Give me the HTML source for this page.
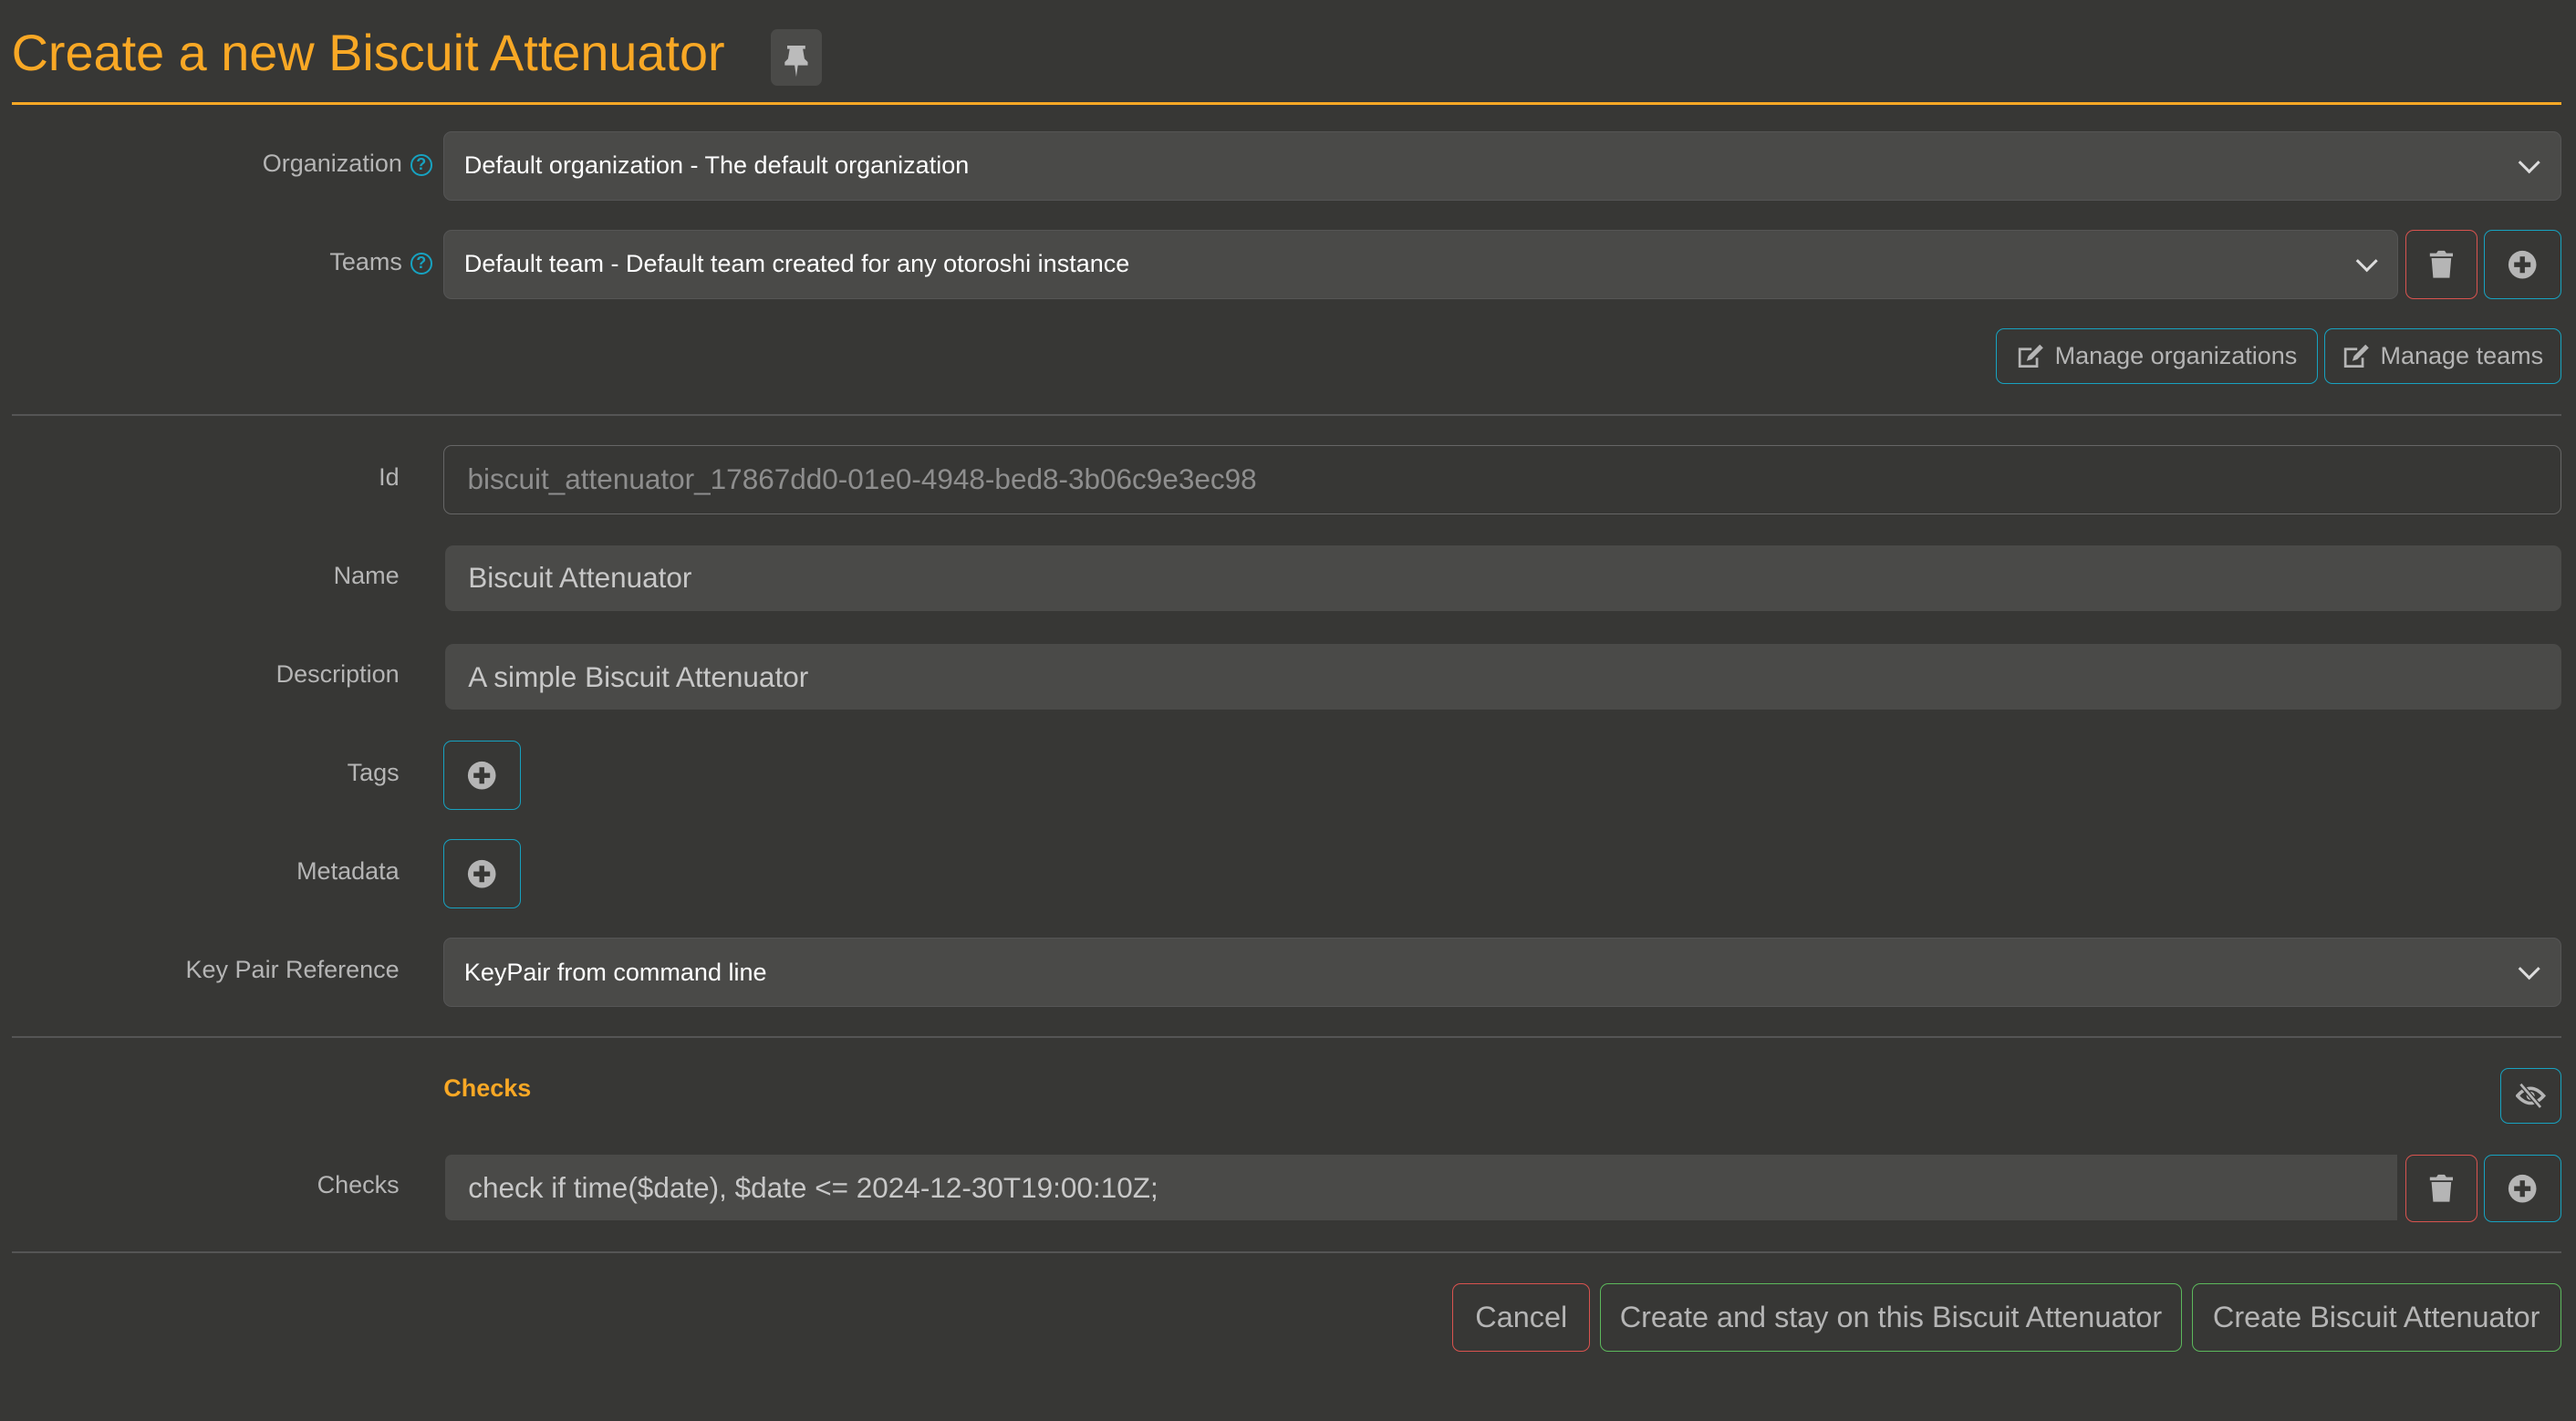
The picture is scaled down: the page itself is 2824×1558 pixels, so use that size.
<!DOCTYPE html>
<html><head><meta charset="utf-8"><style>
html,body{margin:0;padding:0;background:#373735;width:2824px;height:1558px;overflow:hidden}
#w{position:absolute;left:0;top:0;width:1568px;height:865px;zoom:1.80102;font-family:"Liberation Sans",sans-serif}
.a{position:absolute;box-sizing:border-box}
.lbl{position:absolute;right:1325px;color:#b5b5b5;font-size:15px;text-align:right;white-space:nowrap}
.sel{background:#4a4a48;border:1px solid #555;border-radius:5px;color:#fff;font-size:15px;padding-left:12px;display:flex;align-items:center}
.inp{background:#4a4a48;border-radius:5px;color:#c8c8c8;font-size:17.5px;padding-left:14px;display:flex;align-items:center}
.btn{border:1px solid #17a2c0;border-radius:5px;display:flex;align-items:center;justify-content:center;color:#b5b5b5}
.red{border-color:#d9534f}.grn{border-color:#5cb85c}
.hr{position:absolute;left:7px;width:1552px;height:1px;background:#555}
.chev{position:absolute;right:14px;top:50%;width:8px;height:8px;border-right:2px solid #ddd;border-bottom:2px solid #ddd;transform:translateY(-70%) rotate(45deg)}
.q{display:inline-block;width:11px;height:11px;border:1.5px solid #17a2c0;border-radius:50%;color:#17a2c0;font-size:10px;line-height:11px;text-align:center;font-weight:bold;vertical-align:1px;margin-left:5px}
</style></head><body><div id="w">
<div class="a" style="left:7px;top:14px;color:#f9a825;font-size:31px">Create a new Biscuit Attenuator</div>
<div class="a" style="left:469px;top:18px;width:31px;height:34px;background:#4a4a48;border-radius:4px"><svg width="31" height="34" viewBox="0 0 31 34"><path d="M10 10h11v2h-1.5l1 6 2 2v2H8.5v-2l2-2 1-6H10z M14.5 22h2l-1 7z" fill="#bbb"/></svg></div>
<div class="a" style="left:7px;top:62px;width:1552px;height:2px;background:#f9a825"></div>

<div class="lbl" style="top:91px;right:1305px">Organization<span class="q">?</span></div>
<div class="a sel" style="left:270px;top:80px;width:1289px;height:42px">Default organization - The default organization<div class="chev"></div></div>
<div class="lbl" style="top:151px;right:1305px">Teams<span class="q">?</span></div>
<div class="a sel" style="left:270px;top:140px;width:1190px;height:42px">Default team - Default team created for any otoroshi instance<div class="chev"></div></div>
<div class="a btn red" style="left:1464px;top:140px;width:44px;height:42px"><svg width="16" height="18" viewBox="0 0 16 18"><path d="M1 2h4l1-1.5h4L11 2h4v2H1z M2 5h12l-1 12H3z" fill="#b5b5b5"/></svg></div>
<div class="a btn" style="left:1512px;top:140px;width:47px;height:42px"><svg width="18" height="18" viewBox="0 0 18 18"><circle cx="9" cy="9" r="8.5" fill="#b5b5b5"/><path d="M7.5 4h3v3.5H14v3h-3.5V14h-3v-3.5H4v-3h3.5z" fill="#373735"/></svg></div>
<div class="a btn" style="left:1215px;top:200px;width:196px;height:34px;font-size:15px"><svg width="18" height="16" viewBox="0 0 18 16" style="margin-right:5px"><path d="M1 3h8v1.5H2.5v9h9V9H13v6H1z" fill="#b5b5b5"/><path d="M6 11l1-3 7-7 2 2-7 7z" fill="#b5b5b5"/></svg>Manage organizations</div>
<div class="a btn" style="left:1415px;top:200px;width:144px;height:34px;font-size:15px"><svg width="18" height="16" viewBox="0 0 18 16" style="margin-right:5px"><path d="M1 3h8v1.5H2.5v9h9V9H13v6H1z" fill="#b5b5b5"/><path d="M6 11l1-3 7-7 2 2-7 7z" fill="#b5b5b5"/></svg>Manage teams</div>
<div class="hr" style="top:252px"></div>

<div class="lbl" style="top:282px">Id</div>
<div class="a inp" style="left:270px;top:271px;width:1289px;height:42px;background:#373735;border:1px solid #666;color:#8e8e8e">biscuit_attenuator_17867dd0-01e0-4948-bed8-3b06c9e3ec98</div>
<div class="lbl" style="top:342px">Name</div>
<div class="a inp" style="left:271px;top:332px;width:1288px;height:40px">Biscuit Attenuator</div>
<div class="lbl" style="top:402px">Description</div>
<div class="a inp" style="left:271px;top:392px;width:1288px;height:40px">A simple Biscuit Attenuator</div>
<div class="lbl" style="top:462px">Tags</div>
<div class="a btn" style="left:270px;top:451px;width:47px;height:42px"><svg width="18" height="18" viewBox="0 0 18 18"><circle cx="9" cy="9" r="8.5" fill="#b5b5b5"/><path d="M7.5 4h3v3.5H14v3h-3.5V14h-3v-3.5H4v-3h3.5z" fill="#373735"/></svg></div>
<div class="lbl" style="top:522px">Metadata</div>
<div class="a btn" style="left:270px;top:511px;width:47px;height:42px"><svg width="18" height="18" viewBox="0 0 18 18"><circle cx="9" cy="9" r="8.5" fill="#b5b5b5"/><path d="M7.5 4h3v3.5H14v3h-3.5V14h-3v-3.5H4v-3h3.5z" fill="#373735"/></svg></div>
<div class="lbl" style="top:582px">Key Pair Reference</div>
<div class="a sel" style="left:270px;top:571px;width:1289px;height:42px">KeyPair from command line<div class="chev"></div></div>
<div class="hr" style="top:631px"></div>

<div class="a" style="left:270px;top:654px;color:#f9a825;font-size:15px;font-weight:bold">Checks</div>
<div class="a btn" style="left:1522px;top:650px;width:37px;height:34px"><svg width="18" height="16" viewBox="0 0 18 16"><path d="M1 8q8-9 16 0-8 9-16 0z" fill="none" stroke="#b5b5b5" stroke-width="2"/><circle cx="9" cy="8" r="2.5" fill="#b5b5b5"/><path d="M3 1l12 14" stroke="#373735" stroke-width="3"/><path d="M3 1l12 14" stroke="#b5b5b5" stroke-width="1.5"/></svg></div>
<div class="lbl" style="top:713px">Checks</div>
<div class="a inp" style="left:271px;top:703px;width:1188px;height:40px;border-radius:4px 0 0 4px">check if time($date), $date &lt;= 2024-12-30T19:00:10Z;</div>
<div class="a btn red" style="left:1464px;top:703px;width:44px;height:41px"><svg width="16" height="18" viewBox="0 0 16 18"><path d="M1 2h4l1-1.5h4L11 2h4v2H1z M2 5h12l-1 12H3z" fill="#b5b5b5"/></svg></div>
<div class="a btn" style="left:1512px;top:703px;width:47px;height:41px"><svg width="18" height="18" viewBox="0 0 18 18"><circle cx="9" cy="9" r="8.5" fill="#b5b5b5"/><path d="M7.5 4h3v3.5H14v3h-3.5V14h-3v-3.5H4v-3h3.5z" fill="#373735"/></svg></div>
<div class="hr" style="top:762px"></div>

<div class="a btn red" style="left:884px;top:781px;width:84px;height:42px;font-size:18px">Cancel</div>
<div class="a btn grn" style="left:974px;top:781px;width:354px;height:42px;font-size:18px">Create and stay on this Biscuit Attenuator</div>
<div class="a btn grn" style="left:1334px;top:781px;width:225px;height:42px;font-size:18px">Create Biscuit Attenuator</div>
</div></body></html>
